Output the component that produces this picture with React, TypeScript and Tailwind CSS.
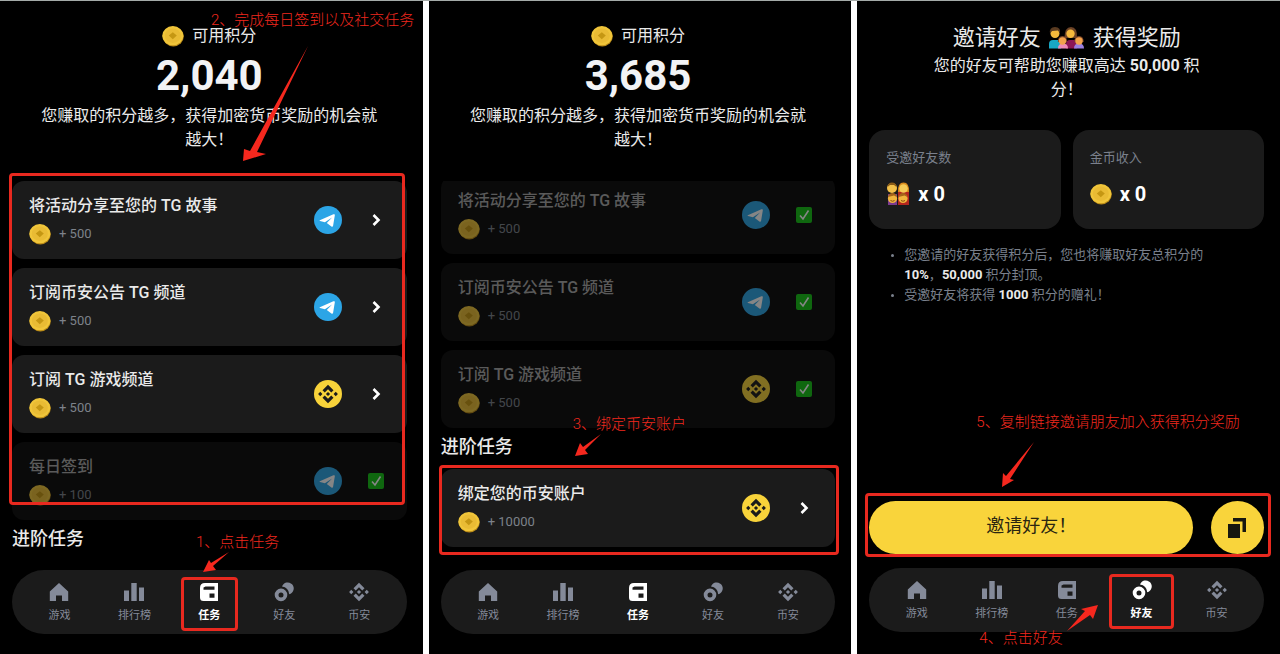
import type { ReactNode } from 'react';

type TabId = 'game' | 'rank' | 'task' | 'friend' | 'binance';

interface Task {
  title: string;
  points: number;
  icon: 'telegram' | 'binance';
  done?: boolean;
}

const TASKS_TODO: Task[] = [
  { title: '将活动分享至您的 TG 故事', points: 500, icon: 'telegram' },
  { title: '订阅币安公告 TG 频道', points: 500, icon: 'telegram' },
  { title: '订阅 TG 游戏频道', points: 500, icon: 'binance' },
  { title: '每日签到', points: 100, icon: 'telegram', done: true },
];

const TASKS_DONE: Task[] = TASKS_TODO.slice(0, 3).map((t) => ({ ...t, done: true }));

const BIND_TASK: Task = { title: '绑定您的币安账户', points: 10000, icon: 'binance' };

const Coin = () => (
  <svg viewBox="0 0 22 22" className="h-[22px] w-[22px] shrink-0" aria-hidden="true">
    <ellipse cx="11.3" cy="11.6" rx="10.5" ry="9.8" fill="#b98a17" />
    <ellipse cx="10.8" cy="10.7" rx="10.6" ry="9.6" fill="#f0c53a" />
    <ellipse cx="10.8" cy="10.7" rx="8" ry="7.2" fill="#e9bb34" />
    <path d="M10.8 7.2l4 3.4-4 3.6-4-3.6z" fill="#c59713" />
  </svg>
);

const BinanceMark = ({ className }: { className: string }) => (
  <svg viewBox="0 0 24 24" className={className} fill="currentColor" aria-hidden="true">
    <path d="M12 1l6.6 6.5-2.7 2.7L12 6.4l-3.9 3.8-2.7-2.7z" />
    <path d="M12 23l6.6-6.5-2.7-2.7-3.9 3.8-3.9-3.8-2.7 2.7z" />
    <path d="M12 9.5l2.5 2.5-2.5 2.5L9.500 12z" />
    <path d="M2.700 9.400L5.300 12l-2.600 2.600L.1 12zM21.300 9.400l2.600 2.600-2.600 2.600-2.600-2.600z" />
  </svg>
);

const TelegramLogo = () => (
  <svg viewBox="0 0 28 28" className="h-7 w-7" aria-hidden="true">
    <circle cx="14" cy="14" r="14" fill="#2ca5e6" />
    <path
      d="M5.800 14.300L19.400 8.300c1-.4 1.600.1 1.400 1.200l-1.700 10.200c-.2 1-.9 1.200-1.700.7l-4.600-3.400 5.300-5.400-7.200 4.700-4.900-1.300c-.6-.2-.7-.5-.2-.7z"
      fill="#fff"
    />
  </svg>
);

const Check = () => (
  <svg viewBox="0 0 16 16" className="h-4 w-4" aria-hidden="true">
    <rect width="16" height="16" rx="2" fill="#15c315" />
    <path d="M4 8.400l3 3.600 5.500-8.500" stroke="#fff" strokeWidth="1.600" fill="none" />
  </svg>
);

const Chevron = () => (
  <svg viewBox="0 0 16 16" className="h-4 w-4" aria-hidden="true">
    <path d="M5.500 3l5 5-5 5" stroke="#fff" strokeWidth="2.600" fill="none" />
  </svg>
);

// two parents with two kids, used in the invite heading
const FamilyIcon = () => (
  <svg viewBox="0 0 36 22" className="h-[22px] w-9" aria-hidden="true">
    <path d="M0 21.500V17q0-4 4-4h5q3 0 3 4v4.500z" fill="#18a7c4" />
    <path d="M17 21.500V17q0-4 4-4h4q3 0 3 4v4.500z" fill="#8c1555" />
    <circle cx="6" cy="6.500" r="4.500" fill="#f5b93c" />
    <path d="M1 6.500Q0 0 6 0q6 .5 5 6L9 3.500 3 4z" fill="#5a3b21" />
    <path d="M15.500 11q0-11 6.500-11t6 11z" fill="#6b4226" />
    <circle cx="21.500" cy="6.800" r="4.200" fill="#f5b93c" />
    <path d="M9 21.500q0-5 5-5t5 5z" fill="#f08bb8" />
    <path d="M8.800 15q0-6 4.700-6t4.700 6z" fill="#7a4526" />
    <circle cx="13.500" cy="14" r="3.700" fill="#f3a24c" />
    <path d="M25 21.500q0-5 5-5t5 5z" fill="#9a7fe0" />
    <path d="M25.300 15q0-6 4.700-6t4.700 6z" fill="#7a4526" />
    <circle cx="30" cy="14" r="3.700" fill="#f3a24c" />
  </svg>
);

const InvitedIcon = () => (
  <svg viewBox="0 0 24 24" className="h-6 w-6" aria-hidden="true">
    <path d="M2 23V12h9v11z" fill="#7c3b8f" />
    <path d="M12 23V10h11v13z" fill="#b3261e" />
    <circle cx="6" cy="6" r="5" fill="#f3c04a" />
    <path d="M1.500 5Q2 .5 6 .5T10.500 5L8 3H4z" fill="#8a5a16" />
    <path d="M12 10q-.5-9.500 5.500-9.500T23 10z" fill="#d88a1c" />
    <circle cx="17.500" cy="6.500" r="4.300" fill="#f6cb57" />
    <circle cx="6.500" cy="16.500" r="4.600" fill="#f1b53c" />
    <circle cx="17" cy="16.500" r="4.600" fill="#f1b53c" />
    <path d="M2 15q1-4 4.500-4t4.500 4l-3-1.500zM12.500 15q1-4 4.500-4t4.500 4l-3-1.500z" fill="#a5641a" />
    <path d="M4.500 18.500q2 1.500 4 0M15 18.500q2 1.500 4 0" stroke="#8a4b12" fill="none" />
  </svg>
);

const TABS: { id: TabId; label: string; icon: ReactNode }[] = [
  {
    id: 'game',
    label: '游戏',
    icon: <path d="M10 1L.8 9.500V19H7v-5.500h6V19h6.200V9.500z" />,
  },
  {
    id: 'rank',
    label: '排行榜',
    icon: <path d="M0 8.500h5V19H0zM7.300 1h5.400v18H7.300zM15 5.500h5V19h-5z" />,
  },
  {
    id: 'task',
    label: '任务',
    icon: (
      <path
        fillRule="evenodd"
        d="M6 1h13v18H4.500Q1 19 1 15.500V6q0-5 5-5zM4.500 5.500v2.300h11V4.500h-9zM10.500 11.500v4.300h5v-4.300z"
      />
    ),
  },
  {
    id: 'friend',
    label: '好友',
    icon: (
      <path
        fillRule="evenodd"
        d="M7 6.600a6.300 6.300 0 1 0 0 12.600A6.300 6.300 0 1 0 7 6.600zM7 10.400a2.500 2.500 0 1 1 0 5 2.500 2.500 0 1 1 0-5zM8 4.600A6 6 0 1 1 15.200 12.200 8.500 8.500 0 0 0 8 4.600z"
      />
    ),
  },
  { id: 'binance', label: '币安', icon: null },
];

const RED_BOX = 'pointer-events-none absolute rounded-sm border-3 border-[#e8291f]';

const NavBar = ({ active, markClass }: { active: TabId; markClass?: string }) => (
  <nav className="mt-auto flex rounded-full bg-[#1b1b1b] px-[10px]">
    {TABS.map((tab) => (
      <button
        key={tab.id}
        type="button"
        className={`relative flex flex-1 flex-col items-center gap-[6px] pt-3 pb-[10px] text-[11px] leading-4 ${
          tab.id === active ? 'font-bold text-white' : 'text-[#848a99]'
        }`}
      >
        {tab.icon ? (
          <svg viewBox="0 0 20 20" className="h-5 w-5" fill="currentColor" aria-hidden="true">
            {tab.icon}
          </svg>
        ) : (
          <BinanceMark className="h-5 w-5" />
        )}
        {tab.label}
        {tab.id === active && markClass && <span className={`${RED_BOX} ${markClass}`} />}
      </button>
    ))}
  </nav>
);

const TaskCard = ({ task }: { task: Task }) => (
  <button
    type="button"
    className={`flex w-full items-center rounded-xl pt-[13px] pr-[23px] pb-[14px] pl-[17px] text-left ${
      task.done ? 'bg-[#0a0a0a]' : 'bg-[#1b1b1b]'
    }`}
  >
    <span className={`flex flex-1 items-center gap-[26px] ${task.done ? 'opacity-50' : ''}`}>
      <span className="flex flex-1 flex-col gap-[5px]">
        <span className={`text-base leading-6 font-medium ${task.done ? 'text-[#aaaaaa]' : 'text-[#eaeaea]'}`}>{task.title}</span>
        <span className="flex items-center gap-2 text-[13px] leading-5 text-[#7d828a]">
          <Coin />+ {task.points}
        </span>
      </span>
      {task.icon === 'telegram' ? (
        <TelegramLogo />
      ) : (
        <span className="flex h-7 w-7 items-center justify-center rounded-full bg-[#f8d33a] text-[#1b1b1b]">
          <BinanceMark className="h-5 w-5" />
        </span>
      )}
      {task.done ? <Check /> : <Chevron />}
    </span>
  </button>
);

const PointsHeader = ({ points }: { points: string }) => (
  <header className="px-6 pb-[29px] text-center text-[#eaeaea]">
    <div className="flex items-center justify-center gap-2 text-base leading-6">
      <Coin />
      可用积分
    </div>
    <div className="mt-1 text-[42px] leading-12 font-bold text-[#f2f3f5]">{points}</div>
    <p className="mt-1 text-base leading-6">您赚取的积分越多，获得加密货币奖励的机会就越大！</p>
  </header>
);

const SectionTitle = () => (
  <h2 className="mt-[5px] mb-2 text-lg leading-7 font-medium text-[#eaeaea]">进阶任务</h2>
);

const Screen = ({ children, className }: { children: ReactNode; className: string }) => (
  <section className={`relative flex flex-col bg-black pr-4 pl-3 ${className}`}>{children}</section>
);

// handwritten-style note placed over a screen
const Note = ({ children, className }: { children: ReactNode; className: string }) => (
  <p className={`pointer-events-none absolute text-[15px] leading-5 font-light whitespace-nowrap text-[#f0281e] ${className}`}>
    {children}
  </p>
);

const Arrow = ({ box, points, className }: { box: string; points: string; className: string }) => (
  <svg viewBox={box} className={`pointer-events-none absolute ${className}`} fill="#f5281e" aria-hidden="true">
    <polygon points={points} />
  </svg>
);

const StatCard = ({ label, icon }: { label: string; icon: ReactNode }) => (
  <div className="flex-1 rounded-2xl bg-[#1b1b1b] px-[17px] pt-[18px] pb-[21px]">
    <div className="text-[13px] leading-5 text-[#7a808c]">{label}</div>
    <div className="mt-3 flex items-center gap-2 text-xl leading-7 font-bold text-white">
      {icon}x 0
    </div>
  </div>
);

const App = () => {
  return (
    <main className="grid min-h-screen grid-cols-3 gap-[6px] border-t border-[#a4aaa8] bg-white font-[Roboto,'Noto_Sans_CJK_SC',sans-serif]">
      <Screen className="pt-[23px] pb-5">
        <PointsHeader points="2,040" />
        <div className="relative flex flex-col gap-[9px]">
          {TASKS_TODO.map((task) => (
            <TaskCard key={task.title} task={task} />
          ))}
          <span className={`${RED_BOX} -top-2 right-[2px] bottom-[15px] -left-[3px]`} />
        </div>
        <SectionTitle />
        <NavBar active="task" markClass="inset-x-[9px] top-[7px] bottom-[3px]" />
        <Note className="top-[9px] left-[211px]">2、完成每日签到以及社交任务</Note>
        <Arrow
          box="0 0 68 116"
          points="67,0 16,106 25,108 2,115 3,103 9,105"
          className="top-[45px] left-[241px] h-[116px] w-[68px]"
        />
        <Note className="top-[531px] left-[196px]">1、点击任务</Note>
        <Arrow
          box="0 0 26 20"
          points="26,0 10,14 13,18 0,20 6,8 8,11"
          className="top-[551px] left-[203px] h-5 w-[26px]"
        />
      </Screen>

      <Screen className="pt-[23px] pb-5">
        <PointsHeader points="3,685" />
        <div className="overflow-hidden">
          <div className="-mt-[5px] flex flex-col gap-[9px]">
            {TASKS_DONE.map((task) => (
              <TaskCard key={task.title} task={task} />
            ))}
          </div>
        </div>
        <SectionTitle />
        <div className="relative">
          <TaskCard task={BIND_TASK} />
          <span className={`${RED_BOX} -top-1 -right-1 -bottom-2 -left-[2px]`} />
        </div>
        <NavBar active="task" />
        <Note className="top-[413px] left-[144px]">3、绑定币安账户</Note>
        <Arrow
          box="0 0 26 22"
          points="26,0 10,16 13,20 0,22 5,9 8,13"
          className="top-[433px] left-[146px] h-[22px] w-[26px]"
        />
      </Screen>

      <Screen className="pt-[21px] pb-[22px]">
        <header className="px-14 text-center text-[#eaeaea]">
          <h1 className="-mx-6 flex items-center justify-center gap-2 text-[22px] leading-8">
            邀请好友 <FamilyIcon /> 获得奖励
          </h1>
          <p className="text-base leading-6">
            您的好友可帮助您赚取高达 <b>50,000</b> 积分！
          </p>
        </header>
        <div className="mt-7 flex gap-3">
          <StatCard label="受邀好友数" icon={<InvitedIcon />} />
          <StatCard label="金币收入" icon={<Coin />} />
        </div>
        <ul className="mt-4 list-disc pr-8 pl-[35px] text-[13px] leading-5 text-[#7a808c] marker:text-[10px]">
          <li>
            您邀请的好友获得积分后，您也将赚取好友总积分的 <b className="text-[#eaeaea]">10%</b>，
            <b className="text-[#eaeaea]">50,000</b> 积分封顶。
          </li>
          <li>
            受邀好友将获得 <b className="text-[#eaeaea]">1000</b> 积分的赠礼！
          </li>
        </ul>
        <div className="relative mt-auto mb-[14px] flex gap-[18px]">
          <button type="button" className="h-[53px] flex-1 rounded-full bg-[#f9d43b] pb-1 text-lg text-[#2a2611]">
            邀请好友！
          </button>
          <button
            type="button"
            aria-label="复制链接"
            className="flex h-[53px] w-[53px] items-center justify-center rounded-full bg-[#f9d43b]"
          >
            <svg viewBox="0 0 20 20" className="h-5 w-5" fill="#17170f" aria-hidden="true">
              <path d="M1 6h12v14H1zM6 0h13v14h-3.500V3.500H6z" />
            </svg>
          </button>
          <span className={`${RED_BOX} -top-2 -right-[7px] -bottom-[3px] -left-1`} />
        </div>
        <div className="flex flex-col">
          <NavBar active="friend" markClass="inset-x-[5px] top-[6px] bottom-[3px]" />
        </div>
        <Note className="top-[411px] left-[119px]">5、复制链接邀请朋友加入获得积分奖励</Note>
        <Arrow
          box="0 0 34 46"
          points="33,0 9,37 13,38 1,45 2,31 5,34"
          className="top-[441px] left-[144px] h-[46px] w-[34px]"
        />
        <Note className="top-[627px] left-[122px]">4、点击好友</Note>
        <Arrow
          box="0 0 32 27"
          points="0,27 18,7 14,5 31,1 26,15 23,11"
          className="top-[603px] left-[210px] h-[27px] w-8"
        />
      </Screen>
    </main>
  );
};

export default App;
